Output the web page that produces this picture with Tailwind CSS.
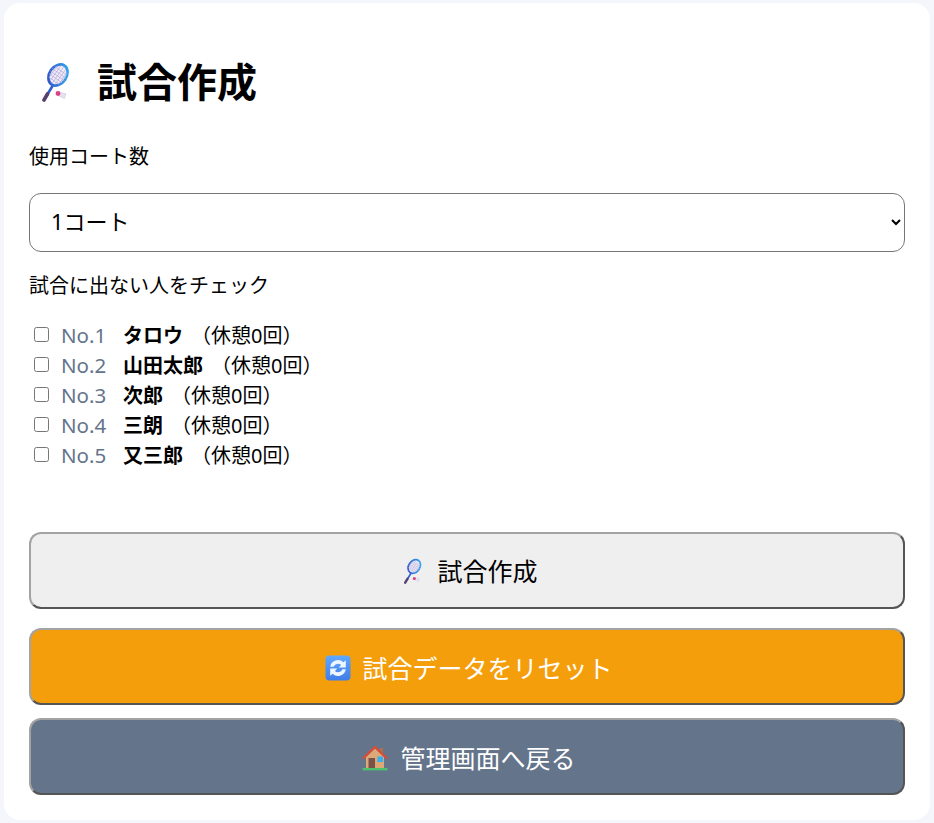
<!DOCTYPE html>
<html lang="ja">
  <head>
    <meta charset="UTF-8" />
    <title>試合作成</title>
    <script src="https://cdn.jsdelivr.net/npm/@tailwindcss/browser@4"></script>
  </head>
  <body class="bg-[#f4f6fb] min-h-screen px-[4px] py-[3px] text-[20px] leading-[30px] text-black font-['Noto_Sans','Noto_Sans_CJK_JP',sans-serif]">
    <svg class="block w-0 h-0">
      <defs>
        <linearGradient id="ring" x1="1" y1="0" x2="0" y2="1">
          <stop offset="0" stop-color="#2fb2f2" />
          <stop offset="1" stop-color="#3049c4" />
        </linearGradient>
        <linearGradient id="blue" x1="0" y1="0" x2="0" y2="1">
          <stop offset="0" stop-color="#5fa8ff" />
          <stop offset="1" stop-color="#3f7de8" />
        </linearGradient>
        <symbol id="racket" viewBox="0 0 30 40">
          <path d="M11.5 24 L6 33" stroke="#2f5cc8" stroke-width="2.6" stroke-linecap="round" />
          <path d="M6.5 32 L3 38" stroke="#55406f" stroke-width="3.6" stroke-linecap="round" />
          <g transform="rotate(35 17 13)">
            <ellipse cx="17" cy="13" rx="8.6" ry="11.4" fill="#f1ecf8" stroke="url(#ring)" stroke-width="2.6" />
            <path d="M11 6v14M14 3.5v19M17 2.5v21M20 3.5v19M23 6v14M9.5 8h15M8.5 11h17M8.5 14h17M9 17h16M11 20h12" stroke="#b4aedb" stroke-width=".7" fill="none" />
          </g>
          <path d="M18 30 L25 32 L23.5 36.5 L17 33.5 Z" fill="#e9e0f0" stroke="#cfc2de" stroke-width=".6" />
          <circle cx="17" cy="31.5" r="2.4" fill="#dd3f86" />
        </symbol>
        <symbol id="refresh" viewBox="0 0 26 26">
          <rect x="0.5" y="0.5" width="25" height="25" rx="4" fill="url(#blue)" />
          <g transform="translate(13 13) scale(1.2) translate(-13 -13)">
            <path d="M6.5 12 A6.6 6.6 0 0 1 17.5 8.2 L19.5 6.5 V12.5 H13.6 L15.6 10.5 A3.9 3.9 0 0 0 9.3 12 Z" fill="#eef5ff" />
            <path d="M19.5 14 A6.6 6.6 0 0 1 8.5 17.8 L6.5 19.5 V13.5 H12.4 L10.4 15.5 A3.9 3.9 0 0 0 16.7 14 Z" fill="#eef5ff" />
          </g>
        </symbol>
        <symbol id="house" viewBox="0 0 26 26">
          <rect x="18" y="3" width="3" height="6" fill="#a9714f" />
          <path d="M4 12 L13 3.5 L22 12 V23 H4 Z" fill="#dba878" />
          <path d="M1.5 13 L13 2 L24.5 13" fill="none" stroke="#dc4b36" stroke-width="2.2" stroke-linecap="round" stroke-linejoin="round" />
          <rect x="6.5" y="13" width="6.5" height="10" fill="#7a5248" />
          <rect x="15.5" y="11.5" width="5.5" height="5.5" fill="#35aef2" />
          <rect x="0.5" y="23" width="25" height="2.4" fill="#4cc06c" />
        </symbol>
      </defs>
    </svg>

    <main class="bg-white rounded-[16px] px-[25px] pt-[49px] pb-[25px]">
      <h1 class="flex items-center text-[40px] leading-[60px] font-bold">
        <svg class="w-[30px] h-[40px] ml-[12px] mr-[26px]"><use href="#racket" /></svg>
        試合作成
      </h1>

      <label class="block mt-[30px]">使用コート数</label>
      <select class="block w-full h-[59px] mt-[21px] px-[17px] pb-[4px] border border-[#767676] rounded-[12px] bg-white text-[22px]">
        <option>1コート</option>
        <option>2コート</option>
      </select>

      <label class="block mt-[19px]">試合に出ない人をチェック</label>
      <ul class="mt-[20px]">
        <li class="flex items-center h-[30px]">
          <input type="checkbox" class="w-[15px] h-[15px] ml-[5px] mr-[12px] mb-[3px]" />
          <span class="w-[62px] mb-[2px] text-[20.5px] text-[#64748b]">No.1</span>
          <b>タロウ</b><span class="ml-[8px]">（休憩0回）</span>
        </li>
        <li class="flex items-center h-[30px]">
          <input type="checkbox" class="w-[15px] h-[15px] ml-[5px] mr-[12px] mb-[3px]" />
          <span class="w-[62px] mb-[2px] text-[20.5px] text-[#64748b]">No.2</span>
          <b>山田太郎</b><span class="ml-[8px]">（休憩0回）</span>
        </li>
        <li class="flex items-center h-[30px]">
          <input type="checkbox" class="w-[15px] h-[15px] ml-[5px] mr-[12px] mb-[3px]" />
          <span class="w-[62px] mb-[2px] text-[20.5px] text-[#64748b]">No.3</span>
          <b>次郎</b><span class="ml-[8px]">（休憩0回）</span>
        </li>
        <li class="flex items-center h-[30px]">
          <input type="checkbox" class="w-[15px] h-[15px] ml-[5px] mr-[12px] mb-[3px]" />
          <span class="w-[62px] mb-[2px] text-[20.5px] text-[#64748b]">No.4</span>
          <b>三朗</b><span class="ml-[8px]">（休憩0回）</span>
        </li>
        <li class="flex items-center h-[30px]">
          <input type="checkbox" class="w-[15px] h-[15px] ml-[5px] mr-[12px] mb-[3px]" />
          <span class="w-[62px] mb-[2px] text-[20.5px] text-[#64748b]">No.5</span>
          <b>又三郎</b><span class="ml-[8px]">（休憩0回）</span>
        </li>
      </ul>

      <button class="flex items-center justify-center w-full h-[77px] mt-[61px] border-2 border-t-[#a3a3a3] border-l-[#a3a3a3] border-r-[#555] border-b-[#555] rounded-[12px] bg-[#efefef] text-[25px]">
        <svg class="w-[22px] h-[26px] ml-[6px] mr-[13px]"><use href="#racket" /></svg>
        試合作成
      </button>
      <button class="flex items-center justify-center w-full h-[77px] mt-[19px] pt-[2px] border-2 border-t-[#a3a3a3] border-l-[#a3a3a3] border-r-[#555] border-b-[#555] rounded-[12px] bg-[#f59e0b] text-white text-[25px]">
        <svg class="w-[26px] h-[26px] ml-[4px] mr-[11px]"><use href="#refresh" /></svg>
        試合データをリセット
      </button>
      <button class="flex items-center justify-center w-full h-[77px] mt-[13px] pt-[2px] border-2 border-t-[#a3a3a3] border-l-[#a3a3a3] border-r-[#555] border-b-[#555] rounded-[12px] bg-[#64748b] text-white text-[25px]">
        <svg class="w-[26px] h-[26px] ml-[4px] mr-[12px]"><use href="#house" /></svg>
        管理画面へ戻る
      </button>
    </main>
  </body>
</html>
